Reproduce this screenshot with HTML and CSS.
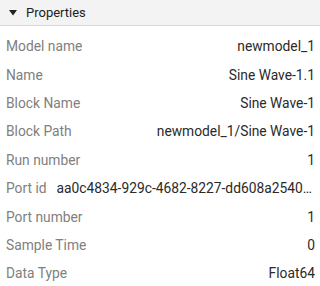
FILE: index.html
```html
<!DOCTYPE html>
<html>
<head>
<meta charset="utf-8">
<link rel="stylesheet" href="styles.css">
</head>
<body>
<div class="panel">
  <div class="header">
    <svg class="caret" width="8" height="6" viewBox="0 0 8 6"><polygon points="0,0 8,0 4,5.5" fill="#222"/></svg>
    <span class="title">Properties</span>
  </div>
  <div class="rows">
    <div class="row"><span class="label">Model name</span><span class="value">newmodel_1</span></div>
    <div class="row"><span class="label">Name</span><span class="value">Sine Wave-1.1</span></div>
    <div class="row"><span class="label">Block Name</span><span class="value">Sine Wave-1</span></div>
    <div class="row"><span class="label">Block Path</span><span class="value">newmodel_1/Sine Wave-1</span></div>
    <div class="row"><span class="label">Run number</span><span class="value">1</span></div>
    <div class="row"><span class="label">Port id</span><span class="value">aa0c4834-929c-4682-8227-dd608a2540e3f</span></div>
    <div class="row"><span class="label">Port number</span><span class="value">1</span></div>
    <div class="row"><span class="label">Sample Time</span><span class="value">0</span></div>
    <div class="row"><span class="label">Data Type</span><span class="value">Float64</span></div>
  </div>
</div>
</body>
</html>
```
FILE: styles.css
```css
html, body {
  margin: 0;
  padding: 0;
  background: #ffffff;
}
body {
  font-family: Roboto, "Liberation Sans", sans-serif;
  font-size: 13px;
  width: 320px;
  height: 286px;
  overflow: hidden;
}
.header {
  display: flex;
  align-items: center;
  height: 25px;
  background: #f3f3f3;
  border-bottom: 1px solid #dcdcdc;
  padding-left: 9px;
}
.caret {
  display: block;
  margin-right: 9px;
}
.title {
  color: #222;
}
.rows {
  display: flex;
  flex-direction: column;
  padding-top: 6px;
  font-size: 13.8px;
}
.row {
  display: flex;
  align-items: center;
  height: 28.4px;
  padding: 0 5px 0 6px;
  gap: 10px;
}
.label {
  color: #808080;
  white-space: nowrap;
  flex-shrink: 0;
}
.value {
  color: #2a2a2a;
  margin-left: auto;
  white-space: nowrap;
  overflow: hidden;
  text-overflow: ellipsis;
  min-width: 0;
}
```
